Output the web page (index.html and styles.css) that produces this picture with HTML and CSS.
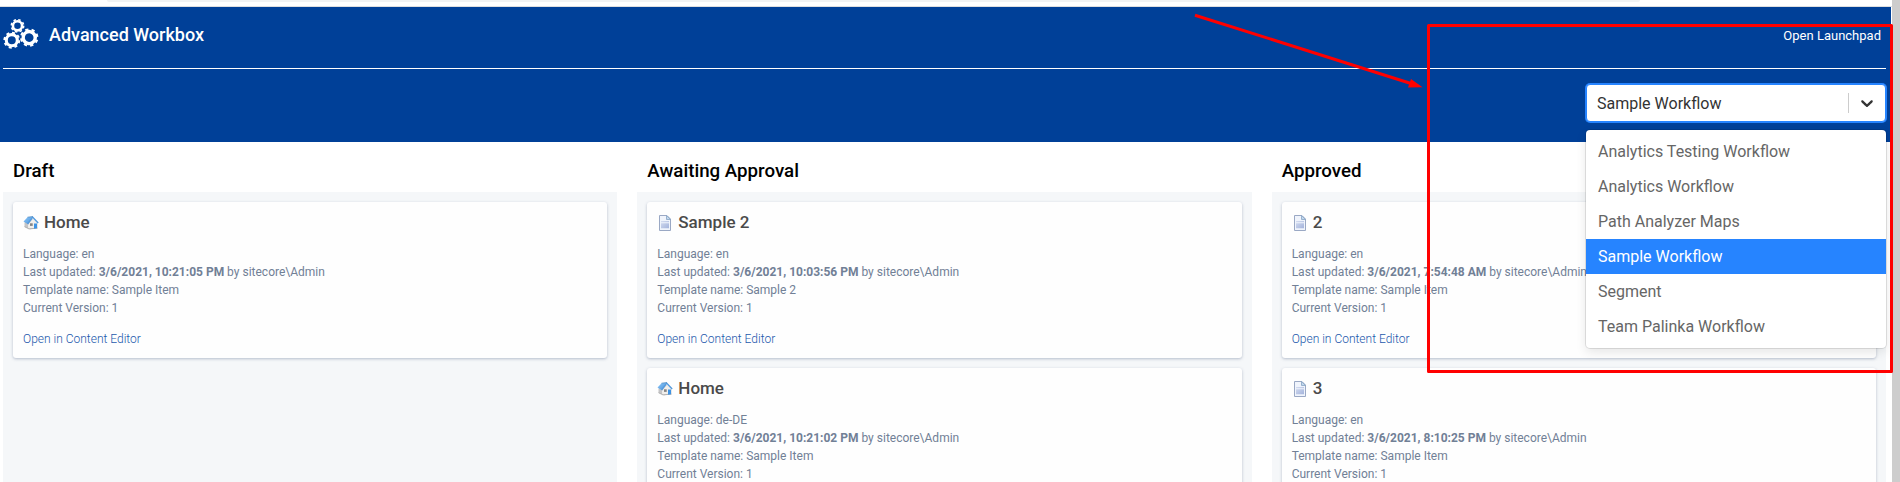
FILE: index.html
```
<!DOCTYPE html>
<html lang="en">
<head>
<meta charset="utf-8">
<title>Advanced Workbox</title>
<link rel="stylesheet" href="styles.css">
</head>
<body>
<svg class="defs" aria-hidden="true">
  <defs>
    <linearGradient id="roof" x1="0" y1="0" x2="1" y2="1"><stop offset="0" stop-color="#8cc8f8"/><stop offset="1" stop-color="#4a92dc"/></linearGradient>
    <linearGradient id="lines" x1="0" y1="0" x2="1" y2="1"><stop offset="0" stop-color="#d4dcf0"/><stop offset="1" stop-color="#a4b4dc"/></linearGradient>
    <g id="gear">
      <circle r="5.700" fill="none" stroke="#fff" stroke-width="3.200"/>
      <circle r="7.700" fill="none" stroke="#fff" stroke-width="2" stroke-dasharray="3.100 2.948"/>
    </g>
    <symbol id="home" viewBox="0 0 16 16">
      <path d="M1.500 7.500 5 4.500 9.800 4 14.500 8.500v4.800L7 14.300l-5.500-2.600z" fill="#c4c4c6"/>
      <path d="M5 9.500 9.800 4 14.500 8.500v4.800L5.200 13.800z" fill="#f1efec"/>
      <path d="M1.500 11.700 6 13.900l8.500-.8" fill="none" stroke="#aaa" stroke-width=".9"/>
      <path d="M.5 6.500 4.500 2.200 10 1.500 4.500 9z" fill="url(#roof)"/>
      <path d="M4.600 9 9.800 2.200 15.200 8" fill="none" stroke="#5399dc" stroke-width="1.300"/>
      <path d="M4.500 2.200 10 1.500" stroke="#4b87be" stroke-width=".7"/>
      <path d="M7 8.300h2.700v2.600H7z" fill="#858585"/>
      <path d="M11 8.500h3v4.800l-3 .4z" fill="#3e93e4"/>
    </symbol>
    <symbol id="doc" viewBox="0 0 16 16">
      <path d="M2.500 .5h7.500l3.500 3.500v11.500h-11z" fill="#f0f4fc" stroke="#9aa8c4"/>
      <path d="M9.500 .5v4h4z" fill="#c2d8ee" stroke="#88a4c4" stroke-width=".8"/>
      <path d="M4 6h8v1.200H4zM4 8.200h8v5H4z" fill="url(#lines)"/>
    </symbol>
  </defs>
</svg>
<div class="window">
  <div class="page">
    <div class="browser-edge"><div class="address-bar"></div></div>
    <header class="header">
      <div class="title-row">
        <svg class="logo" width="38" height="34" viewBox="0 0 38 34">
          <use href="#gear" transform="translate(15.500 7.800) scale(.8)"/>
          <use href="#gear" transform="translate(9.800 22.200) scale(.97)"/>
          <use href="#gear" transform="translate(27.200 19.600) rotate(15) scale(1.060)"/>
        </svg>
        <h1 class="title">Advanced Workbox</h1>
        <a class="launchpad">Open Launchpad</a>
      </div>
      <div class="filter-row">
        <div class="select">
          <div class="control">
            <span class="value">Sample Workflow</span>
            <span class="separator"></span>
            <svg class="chevron" width="20" height="20" viewBox="0 0 20 20"><path d="M4.516 7.548c0.436-0.446 1.043-0.481 1.576 0l3.908 3.747 3.908-3.747c0.533-0.481 1.141-0.446 1.574 0 0.436 0.445 0.408 1.197 0 1.615-0.406 0.418-4.695 4.502-4.695 4.502-0.217 0.223-0.502 0.335-0.787 0.335s-0.570-0.112-0.789-0.335c0 0-4.287-4.084-4.695-4.502s-0.436-1.170 0-1.615z"/></svg>
          </div>
          <div class="menu">
            <div class="option">Analytics Testing Workflow</div>
            <div class="option">Analytics Workflow</div>
            <div class="option">Path Analyzer Maps</div>
            <div class="option selected">Sample Workflow</div>
            <div class="option">Segment</div>
            <div class="option">Team Palinka Workflow</div>
          </div>
        </div>
      </div>
    </header>
    <main class="board">
      <section class="column">
        <h2 class="state">Draft</h2>
        <div class="lane">
          <article class="card">
            <h3 class="name"><svg class="icon"><use href="#home"/></svg><span>Home</span></h3>
            <p>Language: en</p>
            <p>Last updated: <b>3/6/2021, 10:21:05 PM</b> by sitecore\Admin</p>
            <p>Template name: Sample Item</p>
            <p>Current Version: 1</p>
            <a class="edit">Open in Content Editor</a>
          </article>
        </div>
      </section>
      <section class="column">
        <h2 class="state">Awaiting Approval</h2>
        <div class="lane">
          <article class="card">
            <h3 class="name"><svg class="icon"><use href="#doc"/></svg><span>Sample 2</span></h3>
            <p>Language: en</p>
            <p>Last updated: <b>3/6/2021, 10:03:56 PM</b> by sitecore\Admin</p>
            <p>Template name: Sample 2</p>
            <p>Current Version: 1</p>
            <a class="edit">Open in Content Editor</a>
          </article>
          <article class="card">
            <h3 class="name"><svg class="icon"><use href="#home"/></svg><span>Home</span></h3>
            <p>Language: de-DE</p>
            <p>Last updated: <b>3/6/2021, 10:21:02 PM</b> by sitecore\Admin</p>
            <p>Template name: Sample Item</p>
            <p>Current Version: 1</p>
          </article>
        </div>
      </section>
      <section class="column">
        <h2 class="state">Approved</h2>
        <div class="lane">
          <article class="card">
            <h3 class="name"><svg class="icon"><use href="#doc"/></svg><span>2</span></h3>
            <p>Language: en</p>
            <p>Last updated: <b>3/6/2021, 7:54:48 AM</b> by sitecore\Admin</p>
            <p>Template name: Sample Item</p>
            <p>Current Version: 1</p>
            <a class="edit">Open in Content Editor</a>
          </article>
          <article class="card">
            <h3 class="name"><svg class="icon"><use href="#doc"/></svg><span>3</span></h3>
            <p>Language: en</p>
            <p>Last updated: <b>3/6/2021, 8:10:25 PM</b> by sitecore\Admin</p>
            <p>Template name: Sample Item</p>
            <p>Current Version: 1</p>
          </article>
        </div>
      </section>
    </main>
  </div>
  <div class="scrollbar"></div>
  <svg class="annotation" width="1900" height="482" viewBox="0 0 1900 482">
    <rect x="1428.500" y="25.500" width="463" height="346" fill="none" stroke="#f00" stroke-width="3" stroke-linejoin="round"/>
    <path d="M1195 15.200 1411 83.500" stroke="#f00" stroke-width="3"/>
    <path d="M1411 79 1422.500 87.300 1408 87.500z" fill="#f00"/>
  </svg>
</div>
</body>
</html>
```
FILE: styles.css
```
* { box-sizing: border-box; }
body { margin: 0; background: #fff; font-family: Roboto, sans-serif; overflow: hidden; }
h1, h2, h3, p { margin: 0; }
.defs { position: absolute; width: 0; height: 0; }
.window { position: relative; display: flex; width: 1900px; height: 482px; overflow: hidden; }
.page { flex: 1; display: flex; flex-direction: column; min-width: 0; }
.scrollbar { width: 8px; background: #cdcdcd; }
.browser-edge { height: 7px; flex: none; padding: 0 252px 0 107px; border-bottom: 1px solid #dedfe1; }
.address-bar { height: 2px; background: #f1f3f4; border-radius: 0 0 8px 8px; }
.header { height: 135px; flex: none; margin-right: 1px; padding: 0 5px 0 3px; background: #004098; color: #fff; }
.title-row { display: flex; align-items: flex-start; height: 62px; border-bottom: 1px solid #fff; padding: 10px 5px 0 0; }
.logo { margin: 1px 0 0 -1px; }
.title { margin: 4px auto 0 9px; font-size: 18px; line-height: 27px; font-weight: 500; }
.launchpad { margin-top: 9px; font-size: 13px; line-height: 20px; font-weight: 400; }
.filter-row { display: flex; justify-content: flex-end; padding-top: 15px; }
.select { position: relative; width: 300px; }
.control { display: flex; align-items: center; height: 38px; padding: 0 8px 0 10px; border: 1px solid #2684ff; border-radius: 4px; background: #fff; box-shadow: 0 0 0 1px #2684ff; color: #333; font-size: 16px; }
.value { flex: 1; }
.separator { width: 1px; height: 20px; margin-right: 8px; background: #ccc; }
.chevron { fill: #333; }
.menu { position: absolute; z-index: 2; top: 46px; left: 0; width: 100%; padding: 4px 0; background: #fff; border-radius: 4px; box-shadow: 0 0 0 1px rgba(0,0,0,.1), 0 4px 11px rgba(0,0,0,.1); }
.option { height: 35px; padding: 0 12px; font-size: 16px; line-height: 35px; color: #666; }
.selected { background: #2684ff; color: #fff; }
.board { flex: 1; display: grid; grid-template-columns: repeat(3, 1fr); gap: 20px; padding: 0 6px 0 3px; min-height: 0; }
.column { display: flex; flex-direction: column; min-height: 0; }
.state { height: 50px; flex: none; padding: 15px 10px 0; font-size: 18.720px; line-height: 28px; font-weight: 500; color: #000; }
.lane { flex: 1; display: flex; flex-direction: column; gap: 10px; padding: 10px; background: #f5f7f9; min-height: 0; }
.card { height: 156px; flex: none; padding: 10px; border-radius: 3px; background: #fefefe; box-shadow: 0 1px 3px rgba(60,80,120,.35); font-size: 12px; line-height: 18px; color: #718096; }
.name { display: flex; align-items: center; gap: 5px; height: 21px; margin-bottom: 12px; font-size: 17px; font-weight: 500; color: #4a4a4a; }
.name span { padding-bottom: 2px; }
.icon { width: 16px; height: 16px; }
.card b { font-weight: 700; }
.edit { display: block; margin-top: 13px; font-weight: 300; color: #1c58ac; }
.annotation { position: absolute; z-index: 3; left: 0; top: 0; pointer-events: none; }
```
